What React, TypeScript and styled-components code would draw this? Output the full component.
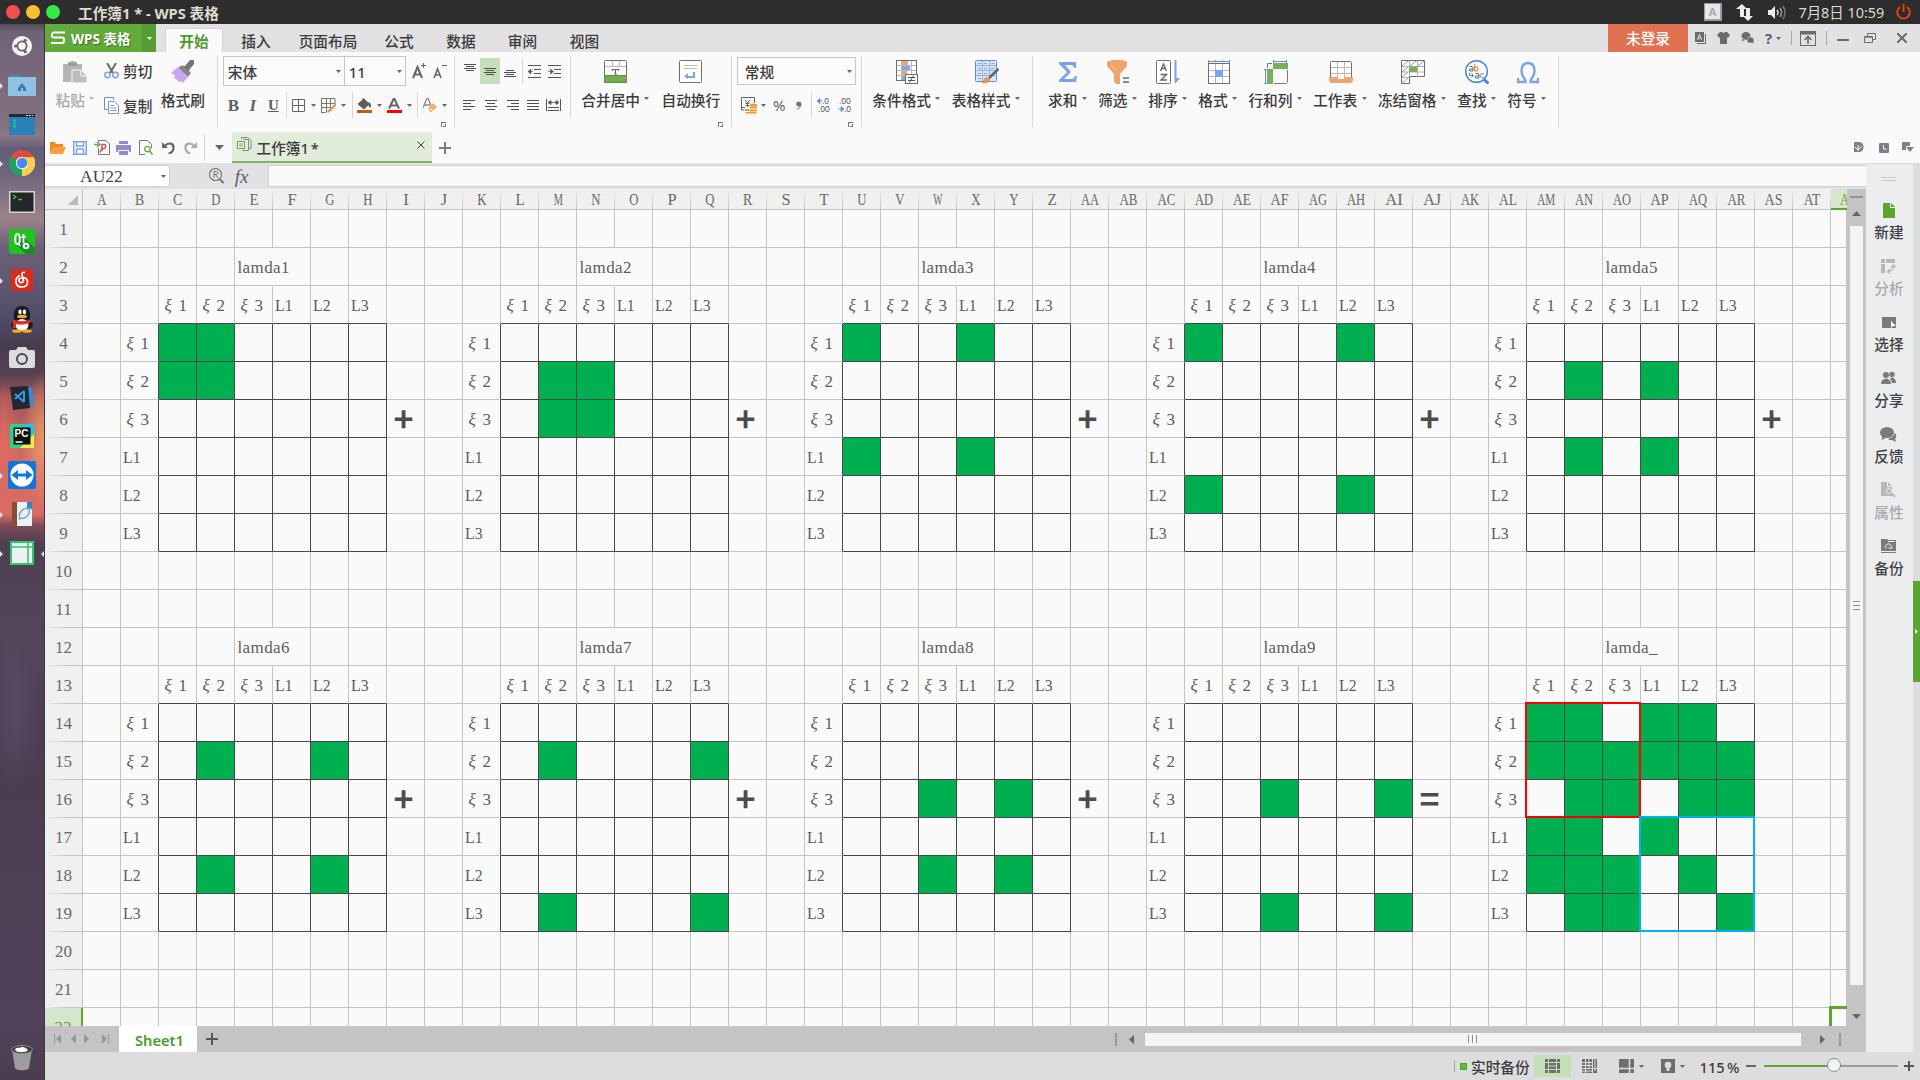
import React from 'react';
import styled, { createGlobalStyle, css } from 'styled-components';

const UI = '"Noto Sans", "Noto Sans CJK SC", sans-serif';
const SERIF = '"Liberation Serif", "Noto Sans CJK SC", serif';
const GREEN = '#5ba531';
const GREY = '#6b6b6b';

const Global = createGlobalStyle`
  * { box-sizing: border-box; }
  html, body { margin: 0; padding: 0; background: #dddde0; }
  body { font-family: ${UI}; font-size: 14.67px; color: #3c3c3c; overflow: hidden; }
  svg { display: block; flex: none; }
`;

const Screen = styled.div`
  width: 1920px; height: 1080px; display: flex; flex-direction: column; overflow: hidden;
`;

/* ---------- desktop title bar ---------- */
const TitleBar = styled.header`
  height: 24px; flex: none; background: #2d2d2d; color: #dfdbd2; display: flex; align-items: center;
  padding: 0 9px 0 6px;
`;
const Light = styled.span<{ $c: string }>`
  width: 14px; height: 14px; border-radius: 50%; background: ${p => p.$c}; margin-right: 6px;
`;
const Title = styled.span`
  font-weight: 700; font-size: 14.67px; margin-left: 12px; line-height: 24px; white-space: pre; padding-top: 1px;
`;
const Tray = styled.div`
  margin-left: auto; display: flex; align-items: center;
`;
const Lang = styled.span`
  width: 18px; height: 18px; background: #e4e8e8; border: 1px solid #9c9c9c; border-right-width: 2px; border-bottom-width: 2px;
  color: #a6acae; font: 700 11px/15px "Noto Sans", sans-serif; text-align: center; margin-right: 14px;
`;
const Clock = styled.span`
  width: 97px; padding-left: 11.5px; font-size: 14.4px; line-height: 24px; white-space: nowrap; padding-top: 1px;
`;

/* ---------- dock ---------- */
const Body = styled.div`
  flex: 1; display: flex; min-height: 0;
`;
const Dock = styled.nav`
  width: 45px; flex: none; display: flex; flex-direction: column; padding: 2.5px 0 9px; border-right: 1px solid #3d3446;
  background:
    linear-gradient(#2d2d2d66, transparent 8px),
    radial-gradient(ellipse 22px 70px at 44px 416px, #f2a968cc, transparent),
    radial-gradient(ellipse 15px 60px at 4px 420px, #e06a60, transparent),
    radial-gradient(ellipse 16px 90px at 14px 680px, #5c506688, transparent),
    radial-gradient(ellipse 16px 60px at 44px 700px, #43354a88, transparent),
    linear-gradient(#6d6175 0, #80707f 90px, #8b7785 112px, #625c78 125px, #6f657c 150px, #9b828a 195px, #6d6178 222px,
      #59536e 275px, #504a64 296px, #473d50 320px, #57404f 350px, #a1565a 372px, #cf6a63 430px, #d96c64 490px, #7d4a58 502px,
      #4d3f52 520px, #54445a 600px, #51435a 700px, #4b3d50 760px, #51425a 1000px, #4a3d4e 1056px);
`;
const DockItem = styled.div<{ $run?: boolean; $last?: boolean; $focus?: boolean }>`
  height: 39px; flex: none; display: flex; align-items: center; justify-content: center; position: relative;
  ${p => p.$last && css`margin-top: auto; height: 26px;`}
  ${p => p.$run && css`
    &::before {
      content: ''; position: absolute; left: 0; top: 17px; border: 3px solid transparent; border-left-color: #e4dfe6; border-right: 0;
    }`}
  ${p => p.$focus && css`
    &::after {
      content: ''; position: absolute; right: 0; top: 17px; border: 3px solid transparent; border-right-color: #e4dfe6; border-left: 0;
    }`}
`;

/* ---------- application ---------- */
const Window = styled.main`
  flex: 1; display: flex; flex-direction: column; min-width: 0; background: #dddde0;
`;
const TabBar = styled.div`
  height: 28px; flex: none; background: #e2e2e4; display: flex; align-items: stretch;
`;
const Brand = styled.div`
  width: 111px; background: #63aa3c; color: #fff; display: flex; align-items: center; font-weight: 700; font-size: 13.5px;
  text-shadow: 1px 1px 1px #35701d; padding-left: 6px; margin-right: 9px;
`;
const BrandText = styled.span`
  margin-left: 6px; width: 71px; white-space: nowrap; flex: none;
`;
const BrandDrop = styled.span`
  width: 14px; height: 28px; background: #579c33; display: flex; align-items: center; justify-content: center; flex: none;
`;
const MenuTab = styled.span<{ $w: number; $on?: boolean }>`
  width: ${p => p.$w}px; text-align: center; line-height: 22px; padding-top: 1.5px; height: 24px; align-self: flex-end; font-weight: 500;
  white-space: nowrap;
  ${p => p.$on && css`
    background: #fafafa; color: #4c9a2a; font-weight: 700; border: 1px solid #d2d2d4; border-bottom: 0; padding-top: 0.5px;`}
`;
const WinTools = styled.div`
  margin-left: auto; display: flex; align-items: center;
`;
const Login = styled.span`
  width: 80px; height: 28px; background: #e07254; color: #fff; text-align: center; line-height: 29px; font-weight: 500;
`;
const Tool = styled.span<{ $w?: number; $ml?: number; $h?: number; $mt?: number; $on?: boolean }>`
  display: flex; align-items: center; justify-content: center; flex: none; margin-top: ${p => p.$mt || 0}px;
  width: ${p => (p.$w ? p.$w + 'px' : 'auto')}; margin-left: ${p => p.$ml || 0}px; height: ${p => (p.$h ? p.$h + 'px' : 'auto')};
  background: ${p => (p.$on ? '#c5e0b8' : 'transparent')};
`;
const Sep = styled.span<{ $h: number; $ml?: number; $mt?: number; $c?: string }>`
  width: 1px; height: ${p => p.$h}px; background: ${p => p.$c || '#d6d6d6'}; margin-left: ${p => p.$ml || 0}px;
  margin-top: ${p => p.$mt || 0}px; flex: none;
`;
const Ribbon = styled.section`
  height: 80px; flex: none; background: #fafafa; display: flex; align-items: flex-start;
`;
const Big = styled.div<{ $ml?: number; $off?: boolean; $nudge?: boolean }>`
  margin-left: ${p => (p.$ml === undefined ? 11.25 : p.$ml)}px; padding-top: 8px; display: flex; flex-direction: column; align-items: center;
  flex: none; color: ${p => (p.$off ? '#a8a8a8' : '#3c3c3c')}; font-weight: 500;
  & > svg { margin-left: ${p => (p.$nudge ? 1.5 : 0)}px; }
`;
const BigLabel = styled.span`
  display: flex; align-items: center; gap: 4.5px; line-height: 22px; margin-top: 5px; white-space: nowrap;
  & > svg { margin-top: -4px; }
`;
const Col = styled.div<{ $ml?: number; $w?: number }>`
  display: flex; flex-direction: column; margin-left: ${p => p.$ml || 0}px; width: ${p => (p.$w ? p.$w + 'px' : 'auto')}; flex: none;
`;
const SmallBtns = styled(Col)`
  padding-top: 1px;
`;
const SmallBtn = styled.div`
  height: 35px; display: flex; align-items: center; gap: 4px; font-weight: 500; white-space: nowrap;
`;
const Row = styled.div<{ $h: number; $mt?: number; $top?: boolean }>`
  height: ${p => p.$h}px; margin-top: ${p => p.$mt || 0}px; display: flex; align-items: ${p => (p.$top ? 'flex-start' : 'center')}; flex: none;
`;
const Combo = styled.span<{ $w: number; $ml?: number; $h?: number; $pl?: number }>`
  width: ${p => p.$w}px; height: ${p => p.$h || 30}px; margin-left: ${p => p.$ml || 0}px; border: 1px solid #c6c6c6; background: #fbfbfb;
  display: flex; align-items: center; justify-content: space-between; padding: 1px 3px 0 ${p => p.$pl || 4}px; font-weight: 500; flex: none;
`;
const Glyph = styled.span<{ $f?: string; $s: number; $w?: number; $i?: boolean; $u?: boolean; $c?: string }>`
  font: ${p => (p.$i ? 'italic ' : '')}${p => p.$w || 400} ${p => p.$s}px/1 ${p => p.$f || UI};
  color: ${p => p.$c || '#5f5f5f'}; text-decoration: ${p => (p.$u ? 'underline' : 'none')};
`;
const Under = styled.span<{ $c: string }>`
  display: flex; flex-direction: column; align-items: center; width: 15px; height: 15px; border-bottom: 3px solid ${p => p.$c};
`;
const Launch = styled.div<{ $mr: number }>`
  display: flex; justify-content: flex-end; padding-right: ${p => p.$mr}px; margin-top: 2px;
`;

const QuickBar = styled.div`
  height: 31px; flex: none; background: #fafafa; display: flex; align-items: center;
`;
const DocTab = styled.div`
  width: 200px; height: 31px; margin-left: 8px; background: #e1edda; border-bottom: 2px solid #7fb562; display: flex; padding: 5px 7px 0 4.5px;
  font-weight: 500;
`;
const DocName = styled.span`
  margin-left: 5px; line-height: 22px; white-space: pre; flex: 1; word-spacing: -2px;
`;

const Main = styled.div`
  height: 889px; flex: none; display: flex;
`;
const Work = styled.div`
  width: 1821px; flex: none; display: flex; flex-direction: column;
`;
const FormulaBar = styled.div`
  height: 26px; flex: none; background: #e2e2e4; display: flex; padding: 2px 0 2px;
`;
const NameBox = styled.div`
  width: 125px; height: 22px; background: #fff; border: 1px solid #cfcfd2; border-left: 0; display: flex; align-items: center;
  justify-content: space-between; padding: 0 3px 0 35px; font: 17.5px/20px ${SERIF}; color: #444;
`;
const FormulaInput = styled.div`
  flex: 1; height: 22px; background: #fafafa; border: 1px solid #cfcfd2; border-right: 0; margin-left: 18px;
`;

const SheetArea = styled.div`
  height: 837px; flex: none; display: flex;
`;
const Sheet = styled.div`
  width: 1802px; height: 837px; overflow: hidden; flex: none; position: relative; background: #fafafa;
  font: 17px/20px ${SERIF}; color: #5c5c5c;
`;
const SheetRow = styled.div<{ $h: number }>`
  display: grid; grid-template-columns: repeat(47, 38px) 16px; height: ${p => p.$h}px;
`;
const Corner = styled.div`
  background: #f0f0f0; border-right: 1px solid #c4c4c4; border-bottom: 1px solid #c4c4c4; display: flex; align-items: flex-end;
  justify-content: flex-end; padding: 0 4px 4px 0;
`;
const ColHead = styled.div<{ $on?: boolean }>`
  display: flex; align-items: center; justify-content: ${p => (p.$on ? 'flex-start' : 'center')}; overflow: hidden;
  padding: 2px 0 0 ${p => (p.$on ? 6 : 0)}px;
  background: ${p => (p.$on ? '#d6e6cc' : 'linear-gradient(#f0f0f0, #c4c4c4) right / 1px 100% no-repeat #f0f0f0')};
  border-bottom: ${p => (p.$on ? `2px solid ${GREEN}` : '1px solid #c4c4c4')}; color: ${p => (p.$on ? GREEN : '#686868')};
  font-size: 16.5px; white-space: nowrap;
`;
const Squeeze = styled.span<{ $k: number }>`
  display: inline-block; transform: scaleX(${p => p.$k}); transform-origin: center;
`;
const RowHead = styled.div<{ $on?: boolean }>`
  display: flex; align-items: center; justify-content: center; padding-top: 2px;
  background: ${p => (p.$on ? '#d6e6cc' : 'linear-gradient(90deg, #f0f0f0, #c4c4c4 60%) bottom / 100% 1px no-repeat #f0f0f0')};
  border-right: ${p => (p.$on ? `2px solid ${GREEN}` : '1px solid #c4c4c4')}; color: ${p => (p.$on ? GREEN : '#686868')};
`;
const Cell = styled.div<{ $fill?: boolean; $r: string; $b: string }>`
  background: ${p => (p.$fill ? '#00b050' : 'transparent')}; border-right: 1px solid ${p => p.$r}; border-bottom: 1px solid ${p => p.$b};
  white-space: nowrap; display: flex; align-items: center; padding: 2px 0 0 2px; min-width: 0;
`;
const Over = styled.span`
  letter-spacing: 0.4px; padding-left: 0.5px;
`;
const LName = styled.span`
  transform: scaleX(0.93); transform-origin: 0 50%;
`;
const Xi = styled.span`
  width: 17.5px; padding-left: 3.5px; font-style: italic; flex: none;
`;
const Sign = styled.span`
  font: 700 34px/34px "Noto Sans CJK SC", sans-serif; color: #4c4c4c; padding-left: 4.5px; margin-top: -4px;
`;
/* coloured outlines and the cell cursor float above the cells */
const Frame = styled.div<{ $c: string; $col: number; $row: number }>`
  position: absolute; left: ${p => 36 + p.$col * 38}px; top: ${p => 19 + (p.$row - 1) * 38}px; width: 116px; height: 116px;
  border: 2px solid ${p => p.$c};
`;
const Cursor = styled.div`
  position: absolute; left: 1784px; top: 817px; width: 40px; height: 40px; border: 3px solid ${GREEN};
`;

const VScroll = styled.div`
  width: 19px; background: #c4c4c6; display: flex; flex-direction: column; align-items: center; padding: 7px 0 7px;
`;
const VDash = styled.span`
  width: 13px; height: 2px; background: #939396; margin-bottom: 13px;
`;
const VThumb = styled.span`
  width: 13px; height: 759px; background: #f4f4f4; margin: 10px 0 auto; display: flex; flex-direction: column; align-items: center;
  justify-content: center; gap: 3px; padding-bottom: 1px;
`;
const Grip = styled.i<{ $v?: boolean }>`
  background: #8e8e90; width: ${p => (p.$v ? 1 : 7)}px; height: ${p => (p.$v ? 8 : 1)}px;
`;
const SheetBar = styled.div`
  height: 26px; flex: none; background: #c4c4c6; display: flex; align-items: center;
`;
const SheetTab = styled.span`
  width: 78px; height: 26px; background: #fff; color: #4c9a2a; font: 600 14.67px/28px ${UI}; text-align: center; margin-left: 10px;
  padding-left: 3px;
`;
const HThumb = styled.span`
  width: 656px; height: 13px; background: #f4f4f4; margin-left: 11px; display: flex; align-items: center; justify-content: center; gap: 3px;
  padding-right: 2px;
`;
const Bar = styled.span<{ $ml: number }>`
  width: 2px; height: 13px; background: #98989b; margin-left: ${p => p.$ml}px;
`;

const Side = styled.aside`
  width: 47px; background: #ecedef; border-top: 1px solid #d8d8da; display: flex; flex-direction: column; align-items: center; flex: none;
  padding-right: 1px;
`;
const SideGrip = styled.span`
  width: 15px; height: 4px; border: 1px solid #c9cacc; border-width: 1px 0; margin: 13px 0 16px -2px;
`;
const SideItem = styled.div<{ $off?: boolean }>`
  height: 56px; display: flex; flex-direction: column; align-items: center; padding-top: 5px; font-weight: 500;
  color: ${p => (p.$off ? '#a9aaac' : '#3f3f3f')};
`;
const SideLabel = styled.span`
  line-height: 22px; margin-top: 2.5px; white-space: nowrap;
`;
const Strip = styled.div`
  width: 7px; background: #dddde0; padding-top: 418px;
`;
const Handle = styled.div`
  height: 101px; background: ${GREEN}; display: flex; align-items: center; justify-content: center;
`;

const StatusBar = styled.footer`
  height: 28px; flex: none; background: #dddde0; display: flex; align-items: center; justify-content: flex-end; padding-right: 6px;
`;
const GreenBox = styled.span`
  width: 7px; height: 7px; background: #5fbb3a; border: 1px solid #4da52c; margin: 1px 4px 0 5px;
`;
const StatusText = styled.span<{ $w: number }>`
  width: ${p => p.$w}px; font-weight: 500; line-height: 28px; padding-top: 1px; white-space: nowrap; word-spacing: -1.5px;
`;
const Slider = styled.div`
  width: 134px; height: 2px; margin-left: 8px; background: linear-gradient(90deg, ${GREEN} 52%, #9a9a9c 52%); display: flex; align-items: center;
  padding-left: 63px;
`;
const Knob = styled.span`
  width: 14px; height: 14px; border-radius: 50%; background: #f4f4f4; border: 1px solid #8c8c8e; margin-top: -3px; flex: none;
`;

/* ---------- small drawings ---------- */
const Arrow = ({ c = '#666', w = 5 }: { c?: string; w?: number }) => (
  <svg width={w} height={Math.ceil(w / 2)} viewBox="0 0 10 6" preserveAspectRatio="none"><path d="M0 0h10L5 6z" fill={c} /></svg>
);
const Lines = ({ rows, w = 12, gap = 3 }: { rows: [number, number][]; w?: number; gap?: number }) => (
  <svg width={w} height={rows.length * gap - gap + 1} shapeRendering="crispEdges">
    {rows.map(([x, l], i) => <rect key={i} x={x} y={i * gap} width={l} height={1} fill="#4e4e4e" />)}
  </svg>
);
const LaunchIcon = () => (
  <svg width="5" height="5" shapeRendering="crispEdges"><path d="M.5 5V.5H5M2 4.5h2.500V2" fill="none" stroke="#777" /></svg>
);
const Svg = ({ w, h, vb, children }: { w: number; h: number; vb?: string; children: React.ReactNode }) => (
  <svg width={w} height={h} viewBox={vb || `0 0 ${w} ${h}`} fill="none">{children}</svg>
);

const Paste = () => (
  <Svg w={24} h={24}>
    <path d="M0 4h5V2h2a3 3 0 0 1 5 0h2v2h5v6h-8v12H0z" fill="#b4b4b4" /><path d="M5 2.500h9V6H5z" fill="#9e9e9e" />
    <path d="M9 10h9l6 6v7H9z" fill="#bdbdbd" stroke="#fafafa" /><path d="M18 10v6h6" stroke="#fafafa" />
  </Svg>
);
const Cut = () => (
  <Svg w={15} h={16}>
    <path d="M3 0l6 10M12 0L6 10" stroke="#6b6b6b" strokeWidth="2" />
    <circle cx="3.500" cy="12" r="2.700" stroke="#7ba3ea" strokeWidth="1.500" /><circle cx="11.500" cy="12" r="2.700" stroke="#7ba3ea" strokeWidth="1.500" />
  </Svg>
);
const Copy = () => (
  <Svg w={15} h={17}>
    <path d="M3.500 12.500h-3v-12h9V3" stroke="#8a8a8a" /><path d="M4.500 4.500h6l4 4v8h-10z" fill="#fff" stroke="#6e9ae6" />
    <path d="M6.500 8.500h4M6.500 11h6M6.500 13.500h6" stroke="#6e9ae6" />
  </Svg>
);
const Brush = () => (
  <Svg w={24} h={24}>
    <path d="M10 6l4 0 5-6h4v4l-5 6 1 4z" fill="#757575" /><path d="M11 5l9 8-3 4L7 8z" fill="#858585" />
    <path d="M7 7l10 10-5 6-2-2-2 1-3-3-2-1 1-3-4-2z" fill="#cfa3f3" />
  </Svg>
);
const Grid = () => <Svg w={13} h={13}><path d="M.5.5h12v12H.5zM6.500 1v11M1 6.500h11" stroke="#666" /></Svg>;
const GridPen = () => (
  <Svg w={15} h={15}>
    <path d="M.5 14V.5H14V7M5.500 1v13M9.500 1v9M1 5.500h13M1 9.500h9" stroke="#777" /><path d="M0 14.500h5" stroke="#777" />
    <path d="M6 15l1-3 7-6 1.500 1.500L9 14z" fill="#f0945a" />
  </Svg>
);
const Bucket = () => (
  <Svg w={14} h={11}><path d="M6 0v3M1 6l6-5 5 5-5 5z" fill="#5e5e5e" stroke="#5e5e5e" /><path d="M12 4c3 2 2 5 1 6-2-2-2-4-1-6z" fill="#5e5e5e" /></Svg>
);
const ClearFmt = () => (
  <Svg w={15} h={15}><path d="M0 10L4 0h1l3 8M1.500 7h5" stroke="#888" strokeWidth="1.300" />
    <path d="M5 10l5-5 4 4-5 5H7z" fill="#f3b267" /><path d="M7 10.500l3 2.500" stroke="#fff" /></Svg>
);
const Indent = ({ flip }: { flip?: boolean }) => (
  <Svg w={13} h={13}>
    <path d="M0 .5h13M6 4.500h7M6 8.500h7M0 12.500h13" stroke="#555" />
    <path d={flip ? 'M0 6.500h3M2.500 4v5l3-2.500z' : 'M2 6.500h3M3 4v5L0 6.500z'} stroke="#555" strokeWidth=".6" fill="#555" />
  </Svg>
);
const Distribute = () => (
  <Svg w={15} h={12}><path d="M.5 0v12M14.500 0v12M2 8.500h11M2 11.500h11" stroke="#555" /><path d="M3 3.500h9M5 1.500l-3 2 3 2zM10 1.500l3 2-3 2z" stroke="#555" fill="#555" strokeWidth=".8" /></Svg>
);
const Merge = () => (
  <Svg w={24} h={24}>
    <rect x=".5" y=".5" width="22" height="22" rx="1" stroke="#6e6e6e" fill="#fff" /><path d="M1 6.500h21M8.500 1v5M15.500 1v5" stroke="#b9b9b9" />
    <path d="M8 9.500h7M11.500 9v5M10 14h3M8.300 9v2M14.700 9v2" stroke="#666" /><path d="M.5 15.500h22v7H.5z" fill="#70ad53" stroke="#5c9443" />
  </Svg>
);
const Wrap = () => (
  <Svg w={24} h={24}>
    <rect x=".5" y=".5" width="22" height="22" rx="1" stroke="#6e6e6e" fill="#fff" /><path d="M5 5.500h13M5 8.500h13" stroke="#b9b9b9" />
    <path d="M15 12v5H8" stroke="#7ba3ea" strokeWidth="2" /><path d="M9 13v6l-4-2.500z" fill="#7ba3ea" />
  </Svg>
);
const Money = () => (
  <Svg w={17} h={17}>
    <path d="M4 10.500H.5V.5h13V6M3.500 13h-3v-3" stroke="#666" /><path d="M4 3l2.500 3L9 3M6.500 6v4M4.500 6.500h4M4.500 8.500h4" stroke="#666" />
    <ellipse cx="12.500" cy="8" rx="3.500" ry="1.500" fill="#f0982f" /><path d="M9 9.500h7v2H9zM9 12.500h7v2H9zM4 12h4.500v2H4zM4.500 15h11v1.500h-11z" fill="#f0982f" />
  </Svg>
);
const Decimals = ({ flip }: { flip?: boolean }) => (
  <Svg w={13} h={16}>
    <g fontFamily="Liberation Sans, sans-serif" fontSize="8.500" fill="#555">
      <text x={flip ? 1 : 5} y="7">{flip ? '.00' : '.0'}</text><text x={flip ? 6 : 1} y="15">{flip ? '.0' : '.00'}</text>
    </g>
    <path d={flip ? 'M0 12h3M3 9.500v5l3-2.500z' : 'M3 4h3M3 1.500v5L0 4z'} fill="#5d8fe8" stroke="#5d8fe8" strokeWidth=".8" />
  </Svg>
);
const Cond = () => (
  <Svg w={22} h={24}>
    <rect x=".5" y=".5" width="20" height="20" fill="#fff" stroke="#6e6e6e" /><path d="M1 5.500h19M1 10.500h19M1 15.500h19M5.500 1v19M10.500 1v19M15.500 1v19" stroke="#b9b9b9" />
    <path d="M6 1h6v4H6zM6 11h5v4H6z" fill="#f4a266" /><path d="M6 6h8v4H6zM6 16h3v4H6z" fill="#7ba7f2" />
    <rect x="9.500" y="14.500" width="12" height="9" fill="#fff" stroke="#6e6e6e" /><path d="M12 17.500h7M12 20.500h7M17.500 15.500l-4 7" stroke="#555" />
  </Svg>
);
const TblStyle = () => (
  <Svg w={24} h={24}>
    <rect x=".5" y=".5" width="21" height="21" rx="1" fill="#d9e5f9" stroke="#5b8fe3" /><path d="M1 5.500h20M1 10.500h20M1 15.500h20M7.500 1v20M14.500 1v20" stroke="#8eb0ec" />
    <path d="M3 3.500h3M9 3.500h3M16 3.500h3M3 8.500h3M9 8.500h3M16 8.500h3M3 13.500h3M9 13.500h3M3 18.500h3" stroke="#8aa5d8" />
    <path d="M23.500 9L14 18" stroke="#666" strokeWidth="2.600" /><path d="M11 17l4 2c0 4-4 5-9 4 3-1 2-5 5-6z" fill="#f0914e" />
  </Svg>
);
const Sigma = () => <Svg w={20} h={24}><path d="M1 2h17v6h-2c-.5-2-1-3-3.500-3H7l6 7-7 7h7c2.500 0 3.500-1 4-3h2l-1 6H1v-2l8-8-8-8z" fill="#7ba3ea" /></Svg>;
const Funnel = () => (
  <Svg w={23} h={24}><path d="M0 2c4-3 16-3 20 0v4l-7 8v10H9l-2-2v-8L0 6z" fill="#f1a469" /><path d="M4 5l5 5" stroke="#fbd6b8" /><path d="M16 18h6M16 22h6" stroke="#666" strokeWidth="1.600" /></Svg>
);
const SortAZ = () => (
  <Svg w={24} h={24}>
    <rect x=".5" y=".5" width="14" height="23" rx="1" fill="#fff" stroke="#6e6e6e" />
    <path d="M4.500 11l3-7 3 7M5.500 8.500h4M4.500 14.500h6l-5.500 5.500h6" stroke="#666" strokeWidth="1.400" />
    <path d="M19.500 0v22" stroke="#7ba3ea" strokeWidth="2" /><path d="M19 18h5l-5 6z" fill="#7ba3ea" />
  </Svg>
);
const Format = () => (
  <Svg w={22} h={24}>
    <path d="M0 1.500h22M.5 0v3M7.500 0v2M14.500 0v2M21.500 0v3" stroke="#5d8fe8" /><rect x=".5" y="3.500" width="21" height="20" fill="#fff" stroke="#6e6e6e" />
    <path d="M7.500 4v19M14.500 4v19M1 10.500h20M1 16.500h20" stroke="#b9b9b9" /><path d="M7 10h8v7H7z" fill="#7ba7f2" />
  </Svg>
);
const RowCol = () => (
  <Svg w={24} h={24}>
    <path d="M9 1.500h14M9.500 0v3M22.500 0v3M1.500 9v14M0 9.500h3M0 23.500h3" stroke="#5d8fe8" /><path d="M3.500 8V3.500H8" stroke="#777" />
    <path d="M9 3h15v6H9zM3 9h6v15H3z" fill="#76b05a" /><path d="M23.500 10v12l-1.500 1.500H10" stroke="#777" />
  </Svg>
);
const WorkSheet = () => (
  <Svg w={24} h={24}>
    <rect x="1.500" y="1.500" width="21" height="18" rx="1" fill="#fff" stroke="#6e6e6e" /><path d="M8.500 2v17M15.500 2v17M2 7.500h20M2 13.500h20" stroke="#b9b9b9" />
    <path d="M0 17h8v2h8v-2h8v4l-2 2H2l-2-2z" fill="#f1a469" />
  </Svg>
);
const Freeze = () => (
  <Svg w={24} h={24}>
    <path d="M.5.500h23v16h-15v7h-8z" fill="#fff" stroke="#6e6e6e" /><path d="M1 6.500h22M1 12h22M1 17.500h7M8.500 1v16M16.500 1v16" stroke="#b0b0b0" />
    <path d="M1 6l6-5M9 6l6-5M17 6l6-5M1 12l6-5M1 17l6-5M1 23l6-5" stroke="#999" /><path d="M8 6.500h8V12H8z" fill="#76b05a" />
  </Svg>
);
const Find = () => (
  <Svg w={24} h={24}>
    <circle cx="11.500" cy="11.500" r="10.800" stroke="#3b86dd" strokeWidth="1.400" fill="#fff" /><path d="M18.500 19l5 4.500" stroke="#3b86dd" strokeWidth="3" />
    <path d="M4.500 6.500q3.500-1 3.500 1.500v3q-4 .5-4-1 .5-1.500 4-1.200" stroke="#666" /><path d="M9.700 3.500V11q3.500.8 3.500-2T9.700 7" stroke="#d9732a" />
    <path d="M10.500 13.500q3.500-1 3.500 1.500v3q-4 .5-4-1 .5-1.500 4-1.200" stroke="#666" /><path d="M19 13.800q-3.500-.8-3.500 2t3.500 2" stroke="#3b86dd" />
    <path d="M4.500 13v2.500H8M6.500 13.500l2 2-2 2" stroke="#3b86dd" />
  </Svg>
);
const Omega = () => (
  <Svg w={22} h={24}><path d="M1 18v4h7.500c0-4-4-5-4-11C4.500 6 7 3 11 3s6.500 3 6.500 8c0 6-4 7-4 11H21v-4" stroke="#7ba3ea" strokeWidth="2.400" /></Svg>
);

/* ---------- dock icons ---------- */
const dockIcons: { run?: boolean; focus?: boolean; el: React.ReactNode }[] = [
  { el: <Svg w={20} h={20}><circle cx="10" cy="10" r="10" fill="#f5f5f5" /><circle cx="10" cy="10" r="4.600" stroke="#6b6070" strokeWidth="1.800" /><circle cx="3.600" cy="10" r="1.600" fill="#6b6070" /><circle cx="13.200" cy="4.300" r="1.600" fill="#6b6070" /><circle cx="13.200" cy="15.700" r="1.600" fill="#6b6070" /></Svg> },
  { run: true, el: <Svg w={28} h={21}><path d="M2 0h9l2 2v4H2z" fill="#4a8ab8" /><path d="M0 2h28v19H0z" fill="#8fc1e4" /><path d="M10 13l4-5 4 5v3h-3v-3h-2v3h-3z" fill="#3b7fae" /></Svg> },
  { el: <Svg w={26} h={21}><path d="M0 0h26v21H0z" fill="#2a80b9" /><path d="M0 0h26v3H0z" fill="#222a33" /><path d="M17 1.500h7" stroke="#eee" strokeDasharray="2 1" /><path d="M4 6.500h3M4 9.500h3M4 12.500h3" stroke="#1fc09b" strokeWidth="2" /></Svg> },
  { run: true, el: <Svg w={26} h={26}><path d="M13 13L1.700 6.500A13 13 0 0 1 24.300 6.500z" fill="#dd4b3e" /><path d="M13 13l11.300-6.500A13 13 0 0 1 13 26z" fill="#fdd04e" /><path d="M13 13v13A13 13 0 0 1 1.700 6.500z" fill="#1da261" /><circle cx="13" cy="13" r="6.200" fill="#fff" /><path d="M13 7h11.500A13 13 0 0 1 14 26l5-10z" fill="#fdd04e" opacity=".9" /><circle cx="13" cy="13" r="5.200" fill="#4688f4" /></Svg> },
  { el: <Svg w={26} h={22}><rect x=".75" y=".75" width="24.500" height="20.500" fill="#232729" stroke="#d4d4d4" strokeWidth="1.500" /><path d="M4 4l3 2-3 2M9 8.500h4" stroke="#3bd11b" strokeWidth="1.300" /></Svg> },
  { el: <Svg w={26} h={25}><rect width="26" height="25" rx="3" fill="#1ec41d" /><path d="M12 6l14 13v3a3 3 0 0 1-3 3h-6L6 15z" fill="#168c2a" /><ellipse cx="8.500" cy="10" rx="2.300" ry="5" stroke="#fff" strokeWidth="2" /><path d="M9 14l2 3M14.500 5v9M12.500 8h4" stroke="#fff" strokeWidth="1.800" /><circle cx="17" cy="17" r="2.300" stroke="#fff" strokeWidth="2" /></Svg> },
  { run: true, el: <Svg w={22} h={22}><rect width="22" height="22" rx="3" fill="#dc2a1b" /><path d="M14 3.500c-2-.5-3.500 0-3 2.500l1.500 5.500a2.300 2.300 0 1 1-2-2.500c3-1 6.500.5 6 4.500-.6 6-10.500 6-11.500 0C4.500 10 6.500 7.500 9 6.500" stroke="#fff" strokeWidth="1.700" /></Svg> },
  { el: <Svg w={26} h={27}><ellipse cx="13" cy="19" rx="11" ry="5.500" fill="#191b24" /><path d="M5 13C4 4 7 0 13 0s9 4 8 13l1 5c0 5-4 8-9 8s-9-3-9-8z" fill="#191b24" /><ellipse cx="13" cy="19" rx="6.500" ry="6" fill="#fff" /><ellipse cx="11" cy="6" rx="1.700" ry="2.400" fill="#fff" /><ellipse cx="15.500" cy="6" rx="1.700" ry="2.400" fill="#fff" /><ellipse cx="13" cy="10.500" rx="5" ry="1.700" fill="#f6a81c" /><path d="M4 13c5 3 13 3 18 0v3c-5 3-11 3-15 2v4H4z" fill="#df2b20" /><ellipse cx="8" cy="25" rx="5" ry="1.800" fill="#f6a81c" /><ellipse cx="18" cy="25" rx="5" ry="1.800" fill="#f6a81c" /></Svg> },
  { el: <Svg w={26} h={22}><path d="M2 3h5l2-3h8l2 3h5a2 2 0 0 1 2 2v14a2 2 0 0 1-2 2H2a2 2 0 0 1-2-2V5a2 2 0 0 1 2-2z" fill="#dcdcdc" /><circle cx="13" cy="12" r="5" stroke="#4d4658" strokeWidth="2" /></Svg> },
  { el: <Svg w={24} h={25}><path d="M18 2l4 1 2 16-4 3z" fill="#2f8fdb" /><path d="M0 2l18-1 2 22-17 2z" fill="#23272e" /><path d="M14 6v11M14 6l-9 8M5 9l9 8" stroke="#2f9be8" strokeWidth="2" /></Svg> },
  { el: <Svg w={24} h={24}><path d="M0 0h24v24H0z" fill="#28d488" /><path d="M12 0h12v12z" fill="#20c3ea" /><path d="M24 10v14H10z" fill="#f2ec4b" /><path d="M3.500 3.500h17v17h-17z" fill="#0d0d0d" /><text x="4.500" y="13" fontFamily="Liberation Sans, sans-serif" fontSize="10" fontWeight="700" fill="#fff">PC</text><path d="M5.500 18h7" stroke="#fff" strokeWidth="1.500" /></Svg> },
  { run: true, el: <Svg w={28} h={28}><rect width="28" height="28" rx="2" fill="#0d77dc" /><circle cx="14" cy="14" r="11.500" fill="#fff" /><path d="M3.500 14l6.500-5v3.500h8V9l6.500 5-6.500 5v-3.500h-8V19z" fill="#0d77dc" /></Svg> },
  { run: true, el: <Svg w={20} h={24}><path d="M4 0h16v24H4z" fill="#eef1f3" /><path d="M0 0h5v24H0z" fill="#86502f" /><path d="M15 0h5v8l-2.500-2L15 8z" fill="#2e86c5" /><path d="M8 16c-3-5 5-12 9-9 2 5-4 11-9 9l-1 2" stroke="#5ea1cf" strokeWidth="1.300" /></Svg> },
  { run: true, focus: true, el: <Svg w={24} h={24}><path d="M1 1h22v22H1z" fill="#eef0f2" stroke="#2fc871" strokeWidth="2" /><path d="M1 6h22M18 1v22" stroke="#2fc871" strokeWidth="1.600" /></Svg> },
];
const Trash = () => (
  <Svg w={22} h={26}><path d="M1 4h20l-3 19c-1 3-13 3-14 0z" fill="#9d9d9d" /><ellipse cx="11" cy="4.500" rx="10.500" ry="4" fill="#3f3f3f" stroke="#8a8a8a" /><path d="M4 5c1-4 5-1 6-3 3 0 4 0 7 3-2 3-11 3-13 0z" fill="#fff" /></Svg>
);

/* ---------- sheet model ---------- */
const LETTERS = 'ABCDEFGHIJKLMNOPQRSTUVWXYZ';
const ADVANCE = [722, 667, 667, 722, 611, 556, 722, 722, 333, 389, 722, 611, 889, 722, 722, 556, 722, 667, 556, 611, 722, 722, 944, 722, 722, 611];
const colName = (i: number) => (i < 26 ? LETTERS[i] : 'A' + LETTERS[i - 26]);
const squeeze = (s: string) => {
  const w = s.split('').reduce((a, c) => a + ADVANCE[LETTERS.indexOf(c)], 0) * 0.0165;
  return Math.min(1, (s.length * 8.8 + 0.4) / w);
};

type Block = { name: string; col: number; row: number; fill: string[]; sign?: string };
const blocks: Block[] = [
  { name: 'lamda1', col: 2, row: 4, sign: '+', fill: ['110000', '110000', '', '', '', ''] },
  { name: 'lamda2', col: 11, row: 4, sign: '+', fill: ['', '011000', '011000', '', '', ''] },
  { name: 'lamda3', col: 20, row: 4, sign: '+', fill: ['100100', '', '', '100100', '', ''] },
  { name: 'lamda4', col: 29, row: 4, sign: '+', fill: ['100010', '', '', '', '100010', ''] },
  { name: 'lamda5', col: 38, row: 4, sign: '+', fill: ['', '010100', '', '010100', '', ''] },
  { name: 'lamda6', col: 2, row: 14, sign: '+', fill: ['', '010010', '', '', '010010', ''] },
  { name: 'lamda7', col: 11, row: 14, sign: '+', fill: ['', '010001', '', '', '', '010001'] },
  { name: 'lamda8', col: 20, row: 14, sign: '+', fill: ['', '', '001010', '', '001010', ''] },
  { name: 'lamda9', col: 29, row: 14, sign: '=', fill: ['', '', '001001', '', '', '001001'] },
  { name: 'lamda_', col: 38, row: 14, fill: ['110110', '111111', '011011', '110100', '111010', '011001'] },
];
const label = (i: number) => (i < 3 ? <><Xi>ξ</Xi>{i + 1}</> : <LName>{'L' + (i - 2)}</LName>);
const inBlock = (c: number, r: number) => blocks.find(b => c >= b.col && c < b.col + 6 && r >= b.row && r < b.row + 6);

const renderCell = (c: number, r: number) => {
  const own = inBlock(c, r);
  let right = own || inBlock(c + 1, r) ? '#484848' : '#c4c4c4';
  const bottom = own || inBlock(c, r + 1) ? '#484848' : '#c4c4c4';
  let content: React.ReactNode = null;
  blocks.forEach(b => {
    if (r === b.row - 2 && c === b.col + 2) { content = <Over>{b.name}</Over>; right = 'transparent'; }
    if (r === b.row - 1 && c >= b.col && c < b.col + 6) content = label(c - b.col);
    if (c === b.col - 1 && r >= b.row && r < b.row + 6) content = label(r - b.row);
    if (b.sign && c === b.col + 6 && r === b.row + 2) content = <Sign>{b.sign}</Sign>;
  });
  return (
    <Cell key={c} $fill={!!own && own.fill[r - own.row][c - own.col] === '1'} $r={right} $b={bottom}>{content}</Cell>
  );
};
const range = (n: number) => Array.from({ length: n }, (_, i) => i);

const bigTools: [string, React.ReactNode][] = [
  ['求和', <Sigma />], ['筛选', <Funnel />], ['排序', <SortAZ />], ['格式', <Format />], ['行和列', <RowCol />],
  ['工作表', <WorkSheet />], ['冻结窗格', <Freeze />], ['查找', <Find />], ['符号', <Omega />],
];

const sideItems: [string, boolean, React.ReactNode][] = [
  ['新建', false, <Svg w={12} h={15}><path d="M0 0h7v5h5v10H0z" fill={GREEN} /><path d="M8 0l4 4H8z" fill={GREEN} /></Svg>],
  ['分析', true, <Svg w={15} h={15}><path d="M0 0h4v4H0zM5 0h9v4H5zM0 5h4v9H0z" fill="#b6b7b9" /><path d="M7 12.500c4 0 5.500-2 5.500-6M9 10l-2.500 2.500L9 15M10 8.500L12.500 6 15 8.500" stroke="#b6b7b9" strokeWidth="1.300" /></Svg>],
  ['选择', false, <Svg w={14} h={13}><path d="M0 1h14v11H0z" fill="#7b7b7d" /><path d="M9 5l5 5h-3l-2 2z" fill="#fff" /></Svg>],
  ['分享', false, <Svg w={15} h={14}><circle cx="5" cy="4" r="3" fill="#7b7b7d" /><circle cx="11" cy="3.500" r="2.700" fill="#7b7b7d" /><path d="M0 13c0-7 10-7 10 0zM9 7c4-1 6 1 6 5h-4z" fill="#7b7b7d" /></Svg>],
  ['反馈', false, <Svg w={17} h={15}><ellipse cx="7" cy="5.500" rx="7" ry="5.500" fill="#7b7b7d" /><path d="M2 9v4l5-3zM15 6c2 2 1 5 0 6l1 3-4-2c-2 0-3 0-4-1 4-1 6-3 7-6z" fill="#7b7b7d" /></Svg>],
  ['属性', true, <Svg w={15} h={16}><path d="M0 0h6v5h5v9H0z" fill="#b6b7b9" /><path d="M7 0l4 4H7z" fill="#b6b7b9" /><circle cx="8" cy="9" r="2.500" stroke="#ecedef" /><path d="M10 11l4 4" stroke="#b6b7b9" strokeWidth="2" /></Svg>],
  ['备份', false, <Svg w={15} h={14}><path d="M0 0h6l1 1h8v11H0zM0 13h15v1H0z" fill="#7b7b7d" /><path d="M7 2.500h7M5 9.500a3 3 0 1 1 5 0M7.500 8l2 2 2-2" stroke="#ecedef" /></Svg>],
];

export default function App() {
  return (
    <Screen>
      <Global />
      <TitleBar>
        <Light $c="#f2504b" /><Light $c="#fbc02f" /><Light $c="#34e84a" />
        <Title>工作簿1 * - WPS 表格</Title>
        <Tray>
          <Lang>A</Lang>
          <Svg w={18} h={17}><path d="M6 0l5 5H8v8H4V5H0zM12 17l-5-5h3V4h4v8h3z" fill="#eee" /></Svg>
          <Tool $ml={14}><Svg w={19} h={15}><path d="M0 5h3l4-4v13l-4-4H0z" fill="#eee" /><path d="M9 5q2 2.500 0 5" stroke="#ddd" strokeWidth="1.500" /><path d="M12 3q3 4.500 0 9" stroke="#999" strokeWidth="1.500" /><path d="M15 1q4 6.500 0 13" stroke="#777" strokeWidth="1.500" /></Svg></Tool>
          <Clock>7月8日 10:59</Clock>
          <Tool $ml={12}><Svg w={15} h={16}><path d="M4 3a6.300 6.300 0 1 0 7 0M7.500 0v8" stroke="#f0400f" strokeWidth="1.800" /></Svg></Tool>
        </Tray>
      </TitleBar>
      <Body>
        <Dock>
          {dockIcons.map((d, i) => <DockItem key={i} $run={d.run} $focus={d.focus}>{d.el}</DockItem>)}
          <DockItem $last><Trash /></DockItem>
        </Dock>
        <Window>
          <TabBar>
            <Brand>
              <Svg w={14} h={14}><path d="M14 1.500H3a2 2 0 0 0-2 2v1a2 2 0 0 0 2 2h8a2 2 0 0 1 2 2v1.500a2 2 0 0 1-2 2H0" stroke="#fff" strokeWidth="2" /></Svg>
              <BrandText>WPS 表格</BrandText>
              <BrandDrop><Arrow c="#fff" /></BrandDrop>
            </Brand>
            <MenuTab $w={58} $on>开始</MenuTab>
            <MenuTab $w={66}>插入</MenuTab>
            <MenuTab $w={78}>页面布局</MenuTab>
            <MenuTab $w={64}>公式</MenuTab>
            <MenuTab $w={60}>数据</MenuTab>
            <MenuTab $w={63}>审阅</MenuTab>
            <MenuTab $w={61}>视图</MenuTab>
            <WinTools>
              <Login>未登录</Login>
              <Tool $ml={7}><Svg w={11} h={12}><path d="M0 0h9v10H0zM10 2h1v10H2v-1h8z" fill={GREY} /><path d="M2.500 8l2-6 2 6M3 6h3" stroke="#e2e2e4" /></Svg></Tool>
              <Tool $ml={11}><Svg w={13} h={12}><path d="M3 0h2q1.500 2 3 0h2l3 3-2 3-1-1v7H3V5L2 6 0 3z" fill={GREY} /></Svg></Tool>
              <Tool $ml={11}><Svg w={13} h={12}><ellipse cx="5" cy="4" rx="4.500" ry="4" fill={GREY} /><path d="M1 6v4l3-2zM6 9c0-6 7-4 7-1 0 2-.5 2 0 4l-2-1c-3 .5-5-.5-5-2z" fill={GREY} stroke="#e2e2e4" strokeWidth=".6" /></Svg></Tool>
              <Tool $ml={10} $w={9}><Glyph $s={15} $w={700}>?</Glyph></Tool>
              <Tool $ml={3}><Arrow /></Tool>
              <Sep $h={14} $ml={10} $c="#a8a8aa" />
              <Tool $ml={8}><Svg w={16} h={15}><rect x=".5" y=".5" width="15" height="14" stroke={GREY} /><path d="M0 0h16v3.500H0z" fill={GREY} /><path d="M8 13V6M4.500 9L8 5.500 11.500 9" stroke={GREY} strokeWidth="1.600" /></Svg></Tool>
              <Sep $h={14} $ml={10} $c="#a8a8aa" />
              <Tool $ml={10} $mt={3}><Svg w={12} h={2}><path d="M0 1h12" stroke={GREY} strokeWidth="2" /></Svg></Tool>
              <Tool $ml={15}><Svg w={12} h={10}><path d="M.5 3.500h8v6h-8zM3.500 3V.5h8v6H9M.5 4.200h8" stroke={GREY} /></Svg></Tool>
              <Tool $ml={21}><Svg w={10} h={10}><path d="M0 0l10 10M10 0L0 10" stroke={GREY} strokeWidth="2" /></Svg></Tool>
              <Tool $w={13} />
            </WinTools>
          </TabBar>

          <Ribbon>
            <Big $ml={10.5} $off><Paste /><BigLabel>粘贴<Arrow c="#b5b5b5" /></BigLabel></Big>
            <SmallBtns $ml={9.7}>
              <SmallBtn><Cut />剪切</SmallBtn>
              <SmallBtn><Copy />复制</SmallBtn>
            </SmallBtns>
            <Big $ml={8.5}><Brush /><BigLabel>格式刷</BigLabel></Big>
            <Sep $h={71} $ml={12} $mt={4} />

            <Col $ml={5} $w={231}>
              <Row $h={30} $mt={4}>
                <Combo $w={122}>宋体<Arrow /></Combo>
                <Combo $w={62} $ml={-1}>11<Arrow /></Combo>
                <Tool $ml={6}><Svg w={15} h={16}><path d="M1 15L5.500 4 10 15M3 11.500h5.500" stroke="#666" strokeWidth="2" /><path d="M9 2.500h5M11.500 0v5" stroke="#666" /></Svg></Tool>
                <Tool $ml={6}><Svg w={14} h={16}><path d="M1 15l3.500-9L8 15M2.500 12h4.500" stroke="#666" strokeWidth="1.600" /><path d="M9 2.500h5" stroke="#666" /></Svg></Tool>
              </Row>
              <Row $h={30} $mt={4}>
                <Tool $ml={5} $w={11}><Glyph $f={SERIF} $s={17} $w={700}>B</Glyph></Tool>
                <Tool $ml={9} $w={10}><Glyph $f={SERIF} $s={17} $w={700} $i>I</Glyph></Tool>
                <Tool $ml={9} $w={13}><Glyph $f={SERIF} $s={15} $w={700} $u>U</Glyph></Tool>
                <Sep $h={26} $ml={6} />
                <Tool $ml={5}><Grid /></Tool><Tool $ml={6}><Arrow /></Tool>
                <Tool $ml={5}><GridPen /></Tool><Tool $ml={5}><Arrow /></Tool>
                <Sep $h={26} $ml={6} />
                <Tool $ml={4}><Under $c="#c55a11"><Bucket /></Under></Tool><Tool $ml={5}><Arrow /></Tool>
                <Tool $ml={5}><Under $c="#ff0000"><Svg w={12} h={12}><path d="M1 10.500L6 0l5 10.500M3 7.500h6" stroke="#666" strokeWidth="2" /></Svg></Under></Tool><Tool $ml={5}><Arrow /></Tool>
                <Sep $h={26} $ml={5} />
                <Tool $ml={5}><ClearFmt /></Tool><Tool $ml={4}><Arrow /></Tool>
              </Row>
              <Launch $mr={8}><LaunchIcon /></Launch>
            </Col>
            <Sep $h={71} $mt={4} />

            <Col $ml={8} $w={107}>
              <Row $h={30} $mt={4}>
                <Tool $w={20} $ml={-3} $mt={-7}><Lines rows={[[0, 12], [2, 8], [0, 12], [2, 8]]} gap={2} /></Tool>
                <Tool $w={20} $h={26} $on><Lines rows={[[0, 12], [2, 8], [0, 12], [2, 8]]} gap={2} /></Tool>
                <Tool $w={20} $mt={5}><Lines rows={[[2, 8], [0, 12], [2, 8], [0, 12]]} gap={2} /></Tool>
                <Sep $h={26} $ml={2} />
                <Tool $ml={5}><Indent /></Tool>
                <Tool $ml={7}><Indent flip /></Tool>
              </Row>
              <Row $h={30} $mt={4}>
                <Tool><Lines rows={[[0, 12], [0, 8], [0, 12], [0, 8]]} /></Tool>
                <Tool $ml={10}><Lines rows={[[0, 12], [2, 8], [0, 12], [2, 8]]} /></Tool>
                <Tool $ml={10}><Lines rows={[[0, 12], [4, 8], [0, 12], [4, 8]]} /></Tool>
                <Tool $ml={8}><Lines rows={[[0, 12], [0, 12], [0, 12], [0, 12]]} /></Tool>
                <Tool $ml={7}><Distribute /></Tool>
              </Row>
            </Col>
            <Sep $h={62} $mt={4} />
            <Col $w={160}>
              <Row $h={68} $top>
                <Big $ml={10.5} $nudge><Merge /><BigLabel>合并居中<Arrow /></BigLabel></Big>
                <Big $ml={12}><Wrap /><BigLabel>自动换行</BigLabel></Big>
              </Row>
              <Launch $mr={8}><LaunchIcon /></Launch>
            </Col>
            <Sep $h={71} $mt={4} />

            <Col $ml={5} $w={124}>
              <Row $h={30} $mt={4}><Combo $w={119} $h={28} $pl={7}>常规<Arrow /></Combo></Row>
              <Row $h={30} $mt={4}>
                <Tool $ml={4}><Money /></Tool><Tool $ml={3}><Arrow /></Tool>
                <Tool $ml={7} $w={13}><Glyph $s={15}>%</Glyph></Tool>
                <Tool $ml={10} $w={6}><Svg w={6} h={9}><circle cx="2.800" cy="3" r="2.600" fill="#777" /><path d="M5 3q0 4-4 5.500" stroke="#777" /></Svg></Tool>
                <Sep $h={26} $ml={9} />
                <Tool $ml={5.5}><Decimals /></Tool>
                <Tool $ml={8}><Decimals flip /></Tool>
              </Row>
              <Launch $mr={8}><LaunchIcon /></Launch>
            </Col>
            <Sep $h={71} $mt={4} />
            <Big $ml={10.5} $nudge><Cond /><BigLabel>条件格式<Arrow /></BigLabel></Big>
            <Big $nudge><TblStyle /><BigLabel>表格样式<Arrow /></BigLabel></Big>
            <Sep $h={71} $ml={12} $mt={4} />
            <Tool $w={4} />
            {bigTools.map(([t, icon]) => <Big key={t} $nudge>{icon}<BigLabel>{t}<Arrow /></BigLabel></Big>)}
            <Sep $h={71} $ml={11.5} $mt={4} />
          </Ribbon>

          <QuickBar>
            <Tool $ml={5}><Svg w={16} h={12}><path d="M0 12V0h5l1 2h7v3H4z" fill="#f08a24" /><path d="M4 5h12l-3 7H0z" fill="#f9a03c" /></Svg></Tool>
            <Tool $ml={7}><Svg w={14} h={14}><path d="M.7.700h12.600v12.600H.7zM3.500 1v4h7V1M3.500 13V8h7v5" stroke="#7ba3ea" strokeWidth="1.400" /></Svg></Tool>
            <Tool $ml={7}><Svg w={16} h={15}><path d="M4.500 8v6.500h11V4L12 .5H4.500V2" stroke="#777" /><path d="M0 4.500h5M3 2l3 2.500L3 7" stroke="#6aa84f" strokeWidth="1.500" /><path d="M8 11V4.500c5-1 5 4 0 4l-2 4" stroke="#d9473f" strokeWidth="1.400" /></Svg></Tool>
            <Tool $ml={6}><Svg w={15} h={14}><path d="M3 0h9v3H3zM0 4h15v7h-2V9H2v2H0zM3 10h9v4H3z" fill="#8f8ccb" /></Svg></Tool>
            <Tool $ml={8}><Svg w={14} h={15}><path d="M6 14.500H.5V.5h8l4 4V8" stroke="#777" /><circle cx="8.500" cy="9" r="2.700" stroke="#6aa84f" strokeWidth="1.300" /><path d="M10.500 11l3 3.500" stroke="#6aa84f" strokeWidth="1.600" /></Svg></Tool>
            <Tool $ml={9}><Svg w={13} h={13}><path d="M0 1v6h6z" fill="#666" /><path d="M3 5c3-4 9-3 8.500 2-.3 3-2 5-5 5.500" stroke="#666" strokeWidth="2.200" /></Svg></Tool>
            <Tool $ml={9}><Svg w={13} h={13}><path d="M13 1v6H7z" fill="#aaa" /><path d="M10 5c-3-4-9-3-8.500 2 .3 3 2 5 5 5.500" stroke="#aaa" strokeWidth="2.200" /></Svg></Tool>
            <Sep $h={27} $ml={7} />
            <Tool $ml={10}><Arrow w={9} /></Tool>
            <DocTab>
              <Svg w={15} h={15}><path d="M4.500 2V.5h6l3.500 3v8h-3M6.500 2.500h5v11h-6" stroke="#888" /><path d="M.5 4.500h7v7h-7zM2 7h4M2 9h4" stroke={GREEN} fill="#fff" /></Svg>
              <DocName>工作簿1 *</DocName>
              <Tool $h={15}><Svg w={8} h={8}><path d="M.5.500l7 7M7.500.500l-7 7" stroke="#444" /></Svg></Tool>
            </DocTab>
            <Tool $ml={7}><Svg w={12} h={12}><path d="M6 0v12M0 6h12" stroke="#7d7d7d" strokeWidth="2" /></Svg></Tool>
            <WinTools>
              <Svg w={10} h={11}><path d="M0 0h5c6 0 6 10 0 10H0z" fill="#7d7f8c" /><path d="M4 9V3M4 8l4-4M4 8L1 5" stroke="#fff" /></Svg>
              <Tool $ml={15}><Svg w={10} h={10}><rect width="10" height="10" rx="1" fill="#7d7f8c" /><path d="M4.500 2v4h3" stroke="#fff" /></Svg></Tool>
              <Tool $ml={13}><Svg w={12} h={11}><path d="M0 0h8v4H4v4H0z" fill="#808080" /><path d="M4 5h8l-4 5z" fill="#808080" /></Svg></Tool>
              <Tool $w={6} />
            </WinTools>
          </QuickBar>

          <Main>
            <Work>
              <FormulaBar>
                <NameBox>AU22<Arrow /></NameBox>
                <Tool $ml={39}><Svg w={15} h={16}><circle cx="6.500" cy="6.500" r="6" stroke="#777" strokeWidth="1.200" /><path d="M10.500 11l4 4" stroke="#777" strokeWidth="2" /><path d="M5 10V3.500h2.500c2 0 2 3 0 3H5M7 7l2 3" stroke="#777" /></Svg></Tool>
                <Tool $ml={9} $w={17}><Glyph $f={SERIF} $s={19} $i>fx</Glyph></Tool>
                <FormulaInput />
              </FormulaBar>
              <SheetArea>
                <Sheet>
                  <SheetRow $h={21}>
                    <Corner><Svg w={10} h={10}><path d="M10 0v10H0z" fill="#b9b9b9" /></Svg></Corner>
                    {range(47).map(c => (
                      <ColHead key={c} $on={c === 46}>
                        <Squeeze $k={squeeze(colName(c))}>{colName(c)}</Squeeze>
                      </ColHead>
                    ))}
                  </SheetRow>
                  {range(22).map(i => (
                    <SheetRow key={i} $h={38}>
                      <RowHead $on={i === 21}>{i + 1}</RowHead>
                      {range(47).map(c => renderCell(c, i + 1))}
                    </SheetRow>
                  ))}
                  <Frame $c="#ff0000" $col={38} $row={14} />
                  <Frame $c="#00b0f0" $col={41} $row={17} />
                  <Cursor />
                </Sheet>
                <VScroll>
                  <VDash />
                  <Svg w={9} h={5}><path d="M4.500 0L9 5H0z" fill="#666" /></Svg>
                  <VThumb><Grip /><Grip /><Grip /></VThumb>
                  <Svg w={9} h={5}><path d="M4.500 5L9 0H0z" fill="#666" /></Svg>
                </VScroll>
              </SheetArea>
              <SheetBar>
                <Tool $ml={9}><Svg w={7} h={10}><path d="M.5 0v10" stroke="#98989b" /><path d="M7 0v10L2 5z" fill="#98989b" /></Svg></Tool>
                <Tool $ml={10}><Svg w={5} h={10}><path d="M5 0v10L0 5z" fill="#98989b" /></Svg></Tool>
                <Tool $ml={8}><Svg w={5} h={10}><path d="M0 0v10l5-5z" fill="#98989b" /></Svg></Tool>
                <Tool $ml={13}><Svg w={7} h={10}><path d="M6.500 0v10" stroke="#98989b" /><path d="M0 0v10l5-5z" fill="#98989b" /></Svg></Tool>
                <SheetTab>Sheet1</SheetTab>
                <Tool $ml={9}><Svg w={12} h={12}><path d="M6 0v12M0 6h12" stroke="#555" strokeWidth="2" /></Svg></Tool>
                <Bar $ml={897} />
                <Tool $ml={12}><Svg w={5} h={9}><path d="M5 0v9L0 4.500z" fill="#666" /></Svg></Tool>
                <HThumb><Grip $v /><Grip $v /><Grip $v /></HThumb>
                <Tool $ml={19}><Svg w={5} h={9}><path d="M0 0v9l5-4.500z" fill="#666" /></Svg></Tool>
                <Bar $ml={14} />
              </SheetBar>
            </Work>
            <Side>
              <SideGrip />
              {sideItems.map(([t, off, icon]) => (
                <SideItem key={t} $off={off}><Tool $h={16}>{icon}</Tool><SideLabel>{t}</SideLabel></SideItem>
              ))}
            </Side>
            <Strip><Handle><Svg w={3} h={5}><path d="M0 0v5l3-2.500z" fill="#fff" /></Svg></Handle></Strip>
          </Main>

          <StatusBar>
            <Sep $h={12} $c="#a8a8aa" />
            <GreenBox />
            <StatusText $w={63}>实时备份</StatusText>
            <Tool $w={37} $h={22} $on><Svg w={15} h={14}><path d="M0 0h15v14H0z" fill="#6e6e70" /><path d="M0 3.500h15M4 7h7M0 10.500h15M3.500 0v14M11.500 0v14" stroke="#c5e0b8" /></Svg></Tool>
            <Tool $ml={11}><Svg w={15} h={14}><path d="M0 0h10v9H0zM11 0h4v9h-4zM0 10h10v4H0zM11 10h4v4h-4z" fill="#6e6e70" /><path d="M0 3.500h10M0 6.500h10M3.500 0v14M7 0v9M13 0v12M0 12h11" stroke="#dddde0" /></Svg></Tool>
            <Tool $ml={22}><Svg w={15} h={14}><path d="M0 0h15v14H0z" fill="#6e6e70" /><path d="M0 9.500h15M10.500 0v14" stroke="#dddde0" strokeWidth="1.500" /></Svg></Tool>
            <Tool $ml={5}><Arrow /></Tool>
            <Tool $ml={17}><Svg w={14} h={14}><path d="M0 0h14v14H0z" fill="#6e6e70" /><circle cx="7" cy="6" r="3.300" fill="#dddde0" /><path d="M5.500 8h3v4h-3z" fill="#dddde0" /></Svg></Tool>
            <Tool $ml={5}><Arrow /></Tool>
            <Tool $w={14.5} />
            <StatusText $w={46.5}>115 %</StatusText>
            <Svg w={10} h={2}><path d="M0 1h10" stroke="#666" strokeWidth="2" /></Svg>
            <Slider><Knob /></Slider>
            <Tool $ml={6}><Svg w={10} h={10}><path d="M5 0v10M0 5h10" stroke="#555" strokeWidth="2" /></Svg></Tool>
          </StatusBar>
        </Window>
      </Body>
    </Screen>
  );
}
